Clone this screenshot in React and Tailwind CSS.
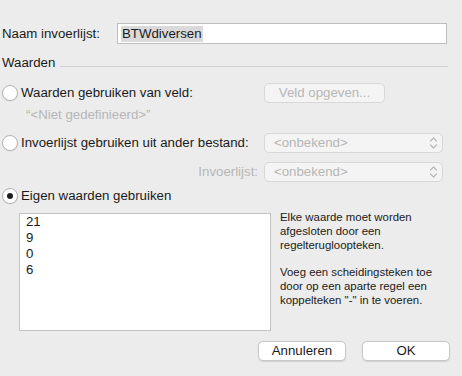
import React from "react";

const font = { fontFamily: '"Liberation Sans", Arial, sans-serif' };

function Radio({ checked }) {
  return (
    <div className="w-[16px] h-[16px] rounded-full bg-white border border-[#b4b4b4] flex items-center justify-center shrink-0 shadow-[0_0.5px_1px_rgba(0,0,0,0.08)]">
      {checked && <div className="w-[6px] h-[6px] rounded-full bg-[#1e1e1e]" />}
    </div>
  );
}

function Chevrons() {
  return (
    <svg width="9" height="14" viewBox="0 0 9 14" fill="none" stroke="#b8b8b8" strokeWidth="1.2" strokeLinecap="round" strokeLinejoin="round">
      <path d="M1.5 5 L4.5 2 L7.5 5" />
      <path d="M1.5 9 L4.5 12 L7.5 9" />
    </svg>
  );
}

function Popup() {
  return (
    <div className="w-[179px] h-[20px] rounded-[5px] border border-[#d8d8d8] bg-[#f4f4f4] flex items-center pl-[9px] pr-[4px] text-[13.25px] text-[#b6b6b6]">
      <span className="flex-1">&lt;onbekend&gt;</span>
      <Chevrons />
    </div>
  );
}

export default function App() {
  return (
    <div className="w-[462px] h-[376px] bg-[#ececec] text-[13.25px] text-[#1a1a1a] flex flex-col pt-[23px]" style={font}>
      {/* Name row */}
      <div className="flex items-center h-[21px]">
        <span className="w-[117px] pl-[2px]">Naam invoerlijst:</span>
        <div className="w-[330px] h-[21px] bg-white border border-[#bdbdbd] flex items-center pl-[3px]">
          <span className="bg-[#dadada] px-[1px] leading-[16px]">BTWdiversen</span>
        </div>
      </div>

      {/* Section heading */}
      <div className="flex items-end mt-[11px] h-[16px]">
        <span className="pl-[2px] leading-[16px]">Waarden</span>
        <div className="ml-[5px] w-[388px] h-px bg-[#d2d2d2] mb-[4px]" />
      </div>

      {/* Radio 1 */}
      <div className="flex items-center h-[20px] mt-[12px]">
        <div className="w-[264px] flex items-center pl-[2px] gap-[3px]">
          <Radio />
          <span>Waarden gebruiken van veld:</span>
        </div>
        <div className="w-[121px] h-[20px] rounded-[5px] border border-[#d8d8d8] bg-[#f4f4f4] flex items-center justify-center text-[#b6b6b6]">
          Veld opgeven...
        </div>
      </div>
      <div className="mt-[4px] h-[16px] leading-[16px] pl-[26px] text-[#b6b6b6]">“&lt;Niet gedefinieerd&gt;”</div>

      {/* Radio 2 */}
      <div className="flex items-center h-[20px] mt-[10px]">
        <div className="w-[264px] flex items-center pl-[2px] gap-[3px]">
          <Radio />
          <span>Invoerlijst gebruiken uit ander bestand:</span>
        </div>
        <Popup />
      </div>
      <div className="flex items-center h-[20px] mt-[9px]">
        <div className="w-[264px] pr-[6px] text-right text-[#b6b6b6]">Invoerlijst:</div>
        <Popup />
      </div>

      {/* Radio 3 */}
      <div className="flex items-center h-[20px] mt-[4px]">
        <div className="flex items-center pl-[2px] gap-[3px]">
          <Radio checked />
          <span>Eigen waarden gebruiken</span>
        </div>
      </div>

      <div className="flex mt-[7px]">
        <div className="ml-[19px] w-[252px] h-[118px] bg-white border border-[#c4c4c4] pl-[6px] pt-0 text-[13.25px] leading-[16px] text-[#1a1a1a]">
          <div>21</div>
          <div>9</div>
          <div>0</div>
          <div>6</div>
        </div>
        <div className="ml-[9px] -mt-[2px] text-[11.4px] leading-[13.75px] text-[#1a1a1a]">
          Elke waarde moet worden<br />
          afgesloten door een<br />
          regelterugloopteken.<br />
          <br />
          Voeg een scheidingsteken toe<br />
          door op een aparte regel een<br />
          koppelteken "-" in te voeren.
        </div>
      </div>

      {/* Buttons */}
      <div className="flex mt-[10px] pl-[258px] gap-[16px]">
        <div className="w-[88px] h-[20px] rounded-[5px] bg-white border border-[#c8c8c8] shadow-[0_0.5px_1px_rgba(0,0,0,0.12)] flex items-center justify-center">Annuleren</div>
        <div className="w-[88px] h-[20px] rounded-[5px] bg-white border border-[#c8c8c8] shadow-[0_0.5px_1px_rgba(0,0,0,0.12)] flex items-center justify-center">OK</div>
      </div>
    </div>
  );
}
